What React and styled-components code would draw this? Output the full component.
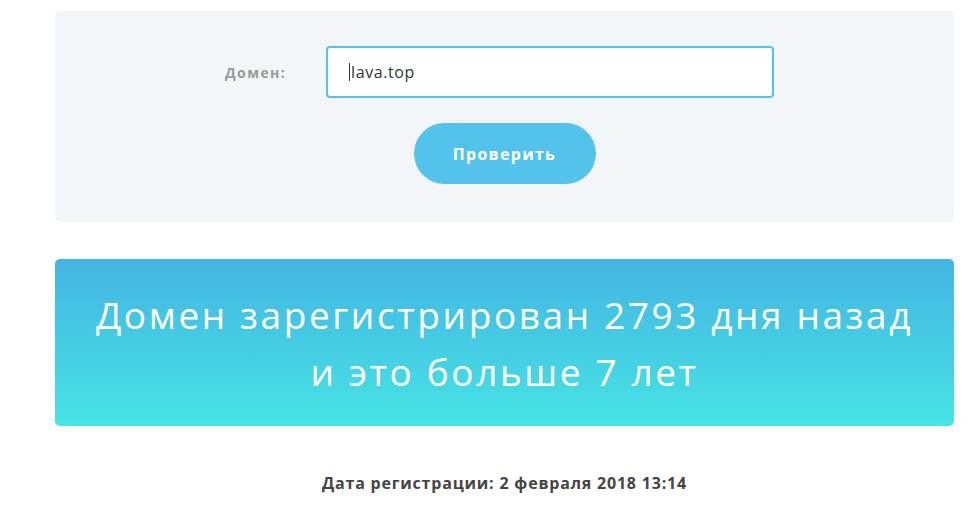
import React from "react";
import styled, { createGlobalStyle } from "styled-components";

const GlobalStyle = createGlobalStyle`
  html, body {
    margin: 0;
    padding: 0;
    background: #fff;
    font-family: "Open Sans", "Noto Sans", sans-serif;
  }
`;

const App = () => {
  const [domain, setDomain] = React.useState("lava.top");
  return (
    <Page>
      <GlobalStyle />
      <FormPanel>
        <Row>
          <Label htmlFor="domain">Домен:</Label>
          <Field>
            <Input
              id="domain"
              value={domain}
              onChange={(e) => setDomain(e.target.value)}
            />
            <Caret />
          </Field>
        </Row>
        <Button>Проверить</Button>
      </FormPanel>
      <ResultPanel>
        <ResultText>
          Домен зарегистрирован 2793 дня назад
          <br />
          и это больше 7 лет
        </ResultText>
      </ResultPanel>
      <DateLine>Дата регистрации: 2 февраля 2018 13:14</DateLine>
    </Page>
  );
};

export default App;

const Page = styled.div`
  width: 899px;
  padding: 11px 0 0 55px;
  display: flex;
  flex-direction: column;
`;

const FormPanel = styled.div`
  background: #f3f6f8;
  border-radius: 5px;
  padding: 35px 0 38px;
  display: flex;
  flex-direction: column;
  align-items: center;
  gap: 25px;
`;

const Row = styled.div`
  align-self: stretch;
  display: flex;
  align-items: center;
  padding-left: 170px;
`;

const Label = styled.label`
  width: 64px;
  margin-right: 37px;
  font-size: 14px;
  font-weight: 700;
  color: #9a9a9a;
  letter-spacing: 1.4px;
`;

const Field = styled.div`
  position: relative;
  display: flex;
`;

const Input = styled.input`
  box-sizing: border-box;
  width: 448px;
  height: 52px;
  padding: 0 22px 0 23px;
  border: 2px solid #55c3ec;
  border-radius: 4px;
  background: #fff;
  font-family: "Open Sans", "Noto Sans", sans-serif;
  font-size: 16px;
  letter-spacing: 0.6px;
  color: #333;
  outline: none;
`;

const Caret = styled.span`
  position: absolute;
  left: 23px;
  top: 17px;
  width: 1px;
  height: 18px;
  background: #333;
  pointer-events: none;
`;

const Button = styled.button`
  width: 182px;
  height: 61px;
  border: none;
  border-radius: 31px;
  background: #53c3ec;
  color: #fff;
  font-family: "Open Sans", "Noto Sans", sans-serif;
  font-size: 16px;
  font-weight: 700;
  letter-spacing: 1.3px;
  cursor: pointer;
`;

const ResultPanel = styled.div`
  margin-top: 37px;
  height: 167px;
  box-sizing: border-box;
  border-radius: 5px;
  background: linear-gradient(180deg, #44b5e3 0%, #46e3e4 100%);
  display: flex;
  align-items: center;
  justify-content: center;
`;

const ResultText = styled.div`
  color: #fff;
  text-align: center;
  font-size: 37px;
  line-height: 57px;
  font-weight: 400;
  letter-spacing: 2.6px;
`;

const DateLine = styled.div`
  margin-top: 47px;
  text-align: center;
  font-size: 16px;
  line-height: 20px;
  font-weight: 700;
  color: #444;
  letter-spacing: 0.8px;
`;
